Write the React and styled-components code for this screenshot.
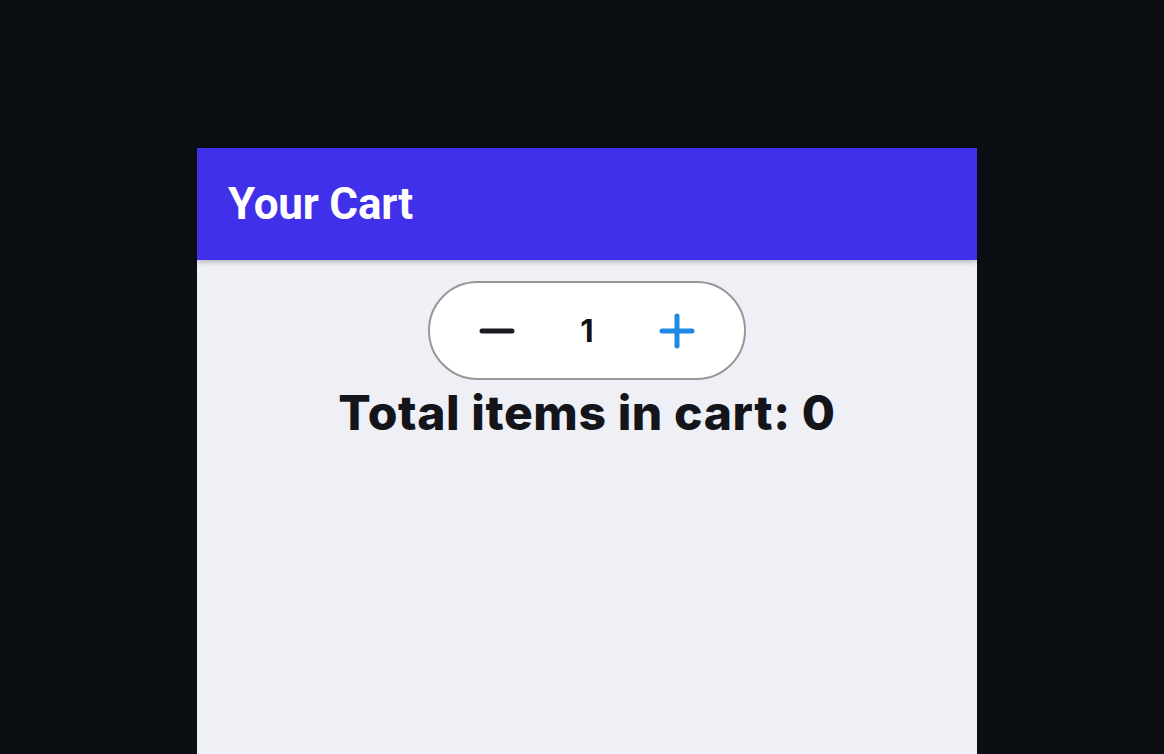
import React, { useState } from 'react';
import styled, { createGlobalStyle } from 'styled-components';

const GlobalStyle = createGlobalStyle`
  html, body {
    margin: 0;
    padding: 0;
    background: #0b0f14;
    height: 100%;
  }
`;

const Page = styled.div`
  height: 754px;
  padding: 148px 0 0 197px;
  box-sizing: border-box;
  overflow: hidden;
`;

const Card = styled.div`
  width: 780px;
  height: 100%;
  background: #eef0f6;
  display: flex;
  flex-direction: column;
`;

const Header = styled.header`
  height: 112px;
  background: #4130ea;
  display: flex;
  align-items: center;
  padding-left: 31px;
  box-shadow: 0 2px 5px rgba(0, 0, 0, 0.25);
  position: relative;
  z-index: 1;
`;

const Title = styled.h1`
  margin: 0;
  font-family: Roboto, "Liberation Sans", sans-serif;
  font-weight: 700;
  font-size: 44px;
  color: #fff;
  letter-spacing: -0.2px;
`;

const Body = styled.main`
  display: flex;
  flex-direction: column;
  align-items: center;
  padding-top: 21px;
`;

const Stepper = styled.div`
  width: 318px;
  height: 99px;
  box-sizing: border-box;
  border: 2px solid #979797;
  border-radius: 50px;
  background: #fff;
  display: grid;
  grid-template-columns: 1fr 1fr 1fr;
  align-items: center;
  padding: 0 22px;
`;

const StepButton = styled.button`
  border: 0;
  background: none;
  padding: 0;
  display: flex;
  justify-content: center;
  align-items: center;
  cursor: pointer;
  color: ${p => p.$color};
`;

const Count = styled.span`
  text-align: center;
  font-family: Inter, "Liberation Sans", sans-serif;
  font-weight: 700;
  font-size: 31px;
  color: #111;
`;

const Total = styled.h2`
  margin: 3px 0 0;
  font-family: Inter, "Liberation Sans", sans-serif;
  font-weight: 800;
  font-size: 48px;
  color: #14151a;
  letter-spacing: 0.6px;
`;

const Minus = () => (
  <svg width="36" height="36" viewBox="0 0 36 36">
    <path d="M3 18h30" stroke="currentColor" strokeWidth="5" strokeLinecap="round" />
  </svg>
);

const Plus = () => (
  <svg width="36" height="36" viewBox="0 0 36 36">
    <path d="M3 18h30M18 3v30" stroke="currentColor" strokeWidth="5" strokeLinecap="round" />
  </svg>
);

export default function App() {
  const [qty, setQty] = useState(1);
  return (
    <Page>
      <GlobalStyle />
      <Card>
        <Header>
          <Title>Your Cart</Title>
        </Header>
        <Body>
          <Stepper>
            <StepButton $color="#1b1c20" onClick={() => setQty(q => Math.max(0, q - 1))}>
              <Minus />
            </StepButton>
            <Count>{qty}</Count>
            <StepButton $color="#1e88e5" onClick={() => setQty(q => q + 1)}>
              <Plus />
            </StepButton>
          </Stepper>
          <Total>Total items in cart: 0</Total>
        </Body>
      </Card>
    </Page>
  );
}
